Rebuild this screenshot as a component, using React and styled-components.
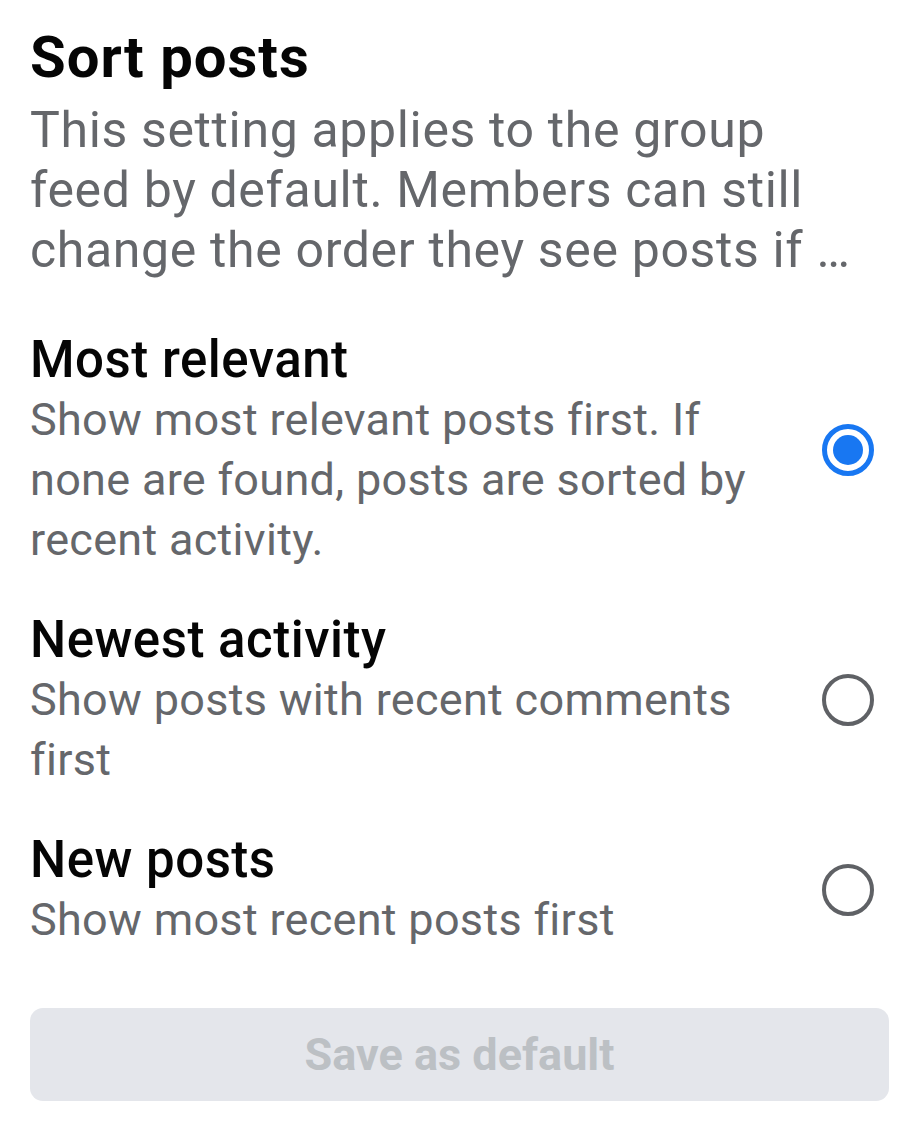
import styled, { createGlobalStyle } from "styled-components";

const GlobalStyle = createGlobalStyle`
  body {
    margin: 0;
    background: #fff;
    font-family: Roboto, "Liberation Sans", sans-serif;
  }
`

const Page = styled.div`
  padding: 23px 30px 28px 30px;
  color: #050505;
`

const Title = styled.h1`
  margin: 0;
  font-size: 58px;
  line-height: 68px;
  font-weight: 700;
  letter-spacing: 1px;
`

const Intro = styled.p`
  margin: 9px 0 0;
  max-width: 834px;
  font-size: 50px;
  line-height: 60px;
  letter-spacing: 0.65px;
  color: #65676b;
`

const Options = styled.div`
  display: flex;
  flex-direction: column;
  gap: 40px;
  margin-top: 50px;
`

const Option = styled.label`
  display: grid;
  grid-template-columns: 1fr 52px;
  column-gap: 47px;
  align-items: center;
  padding-right: 15px;
  cursor: pointer;
`

const OptionTitle = styled.div`
  font-size: 51px;
  line-height: 60px;
  font-weight: 500;
  letter-spacing: 0.5px;
  color: #050505;
`

const OptionDesc = styled.div`
  font-size: 45px;
  line-height: 60px;
  letter-spacing: 0.3px;
  color: #65676b;
`

const Radio = styled.span`
  box-sizing: border-box;
  width: 52px;
  height: 52px;
  border-radius: 50%;
  border: ${p => p.checked ? '5px solid #1877f2' : '4px solid #5f6165'};
  display: flex;
  align-items: center;
  justify-content: center;
  &::after{
    content: '';
    display: ${p => p.checked ? 'block' : 'none'};
    width: 30px;
    height: 30px;
    border-radius: 50%;
    background: #1877f2;
  }
`

const SaveButton = styled.button`
  display: block;
  width: 100%;
  height: 93px;
  margin-top: 58px;
  border: 0;
  border-radius: 13px;
  background: #e4e6eb;
  color: #bcc0c4;
  font-family: Roboto, "Liberation Sans", sans-serif;
  font-size: 45px;
  font-weight: 700;
`

const options = [
  {
    title: 'Most relevant',
    desc: 'Show most relevant posts first. If none are found, posts are sorted by recent activity.',
    checked: true,
  },
  {
    title: 'Newest activity',
    desc: 'Show posts with recent comments first',
  },
  {
    title: 'New posts',
    desc: 'Show most recent posts first',
  },
]

export default function App(){
  return(
    <>
      <GlobalStyle/>
      <Page>
        <Title>Sort posts</Title>
        <Intro>This setting applies to the group feed by default. Members can still change the order they see posts if …</Intro>
        <Options>
          {options.map(o => (
            <Option key={o.title}>
              <div>
                <OptionTitle>{o.title}</OptionTitle>
                <OptionDesc>{o.desc}</OptionDesc>
              </div>
              <Radio checked={o.checked}/>
            </Option>
          ))}
        </Options>
        <SaveButton disabled>Save as default</SaveButton>
      </Page>
    </>
  )
}
